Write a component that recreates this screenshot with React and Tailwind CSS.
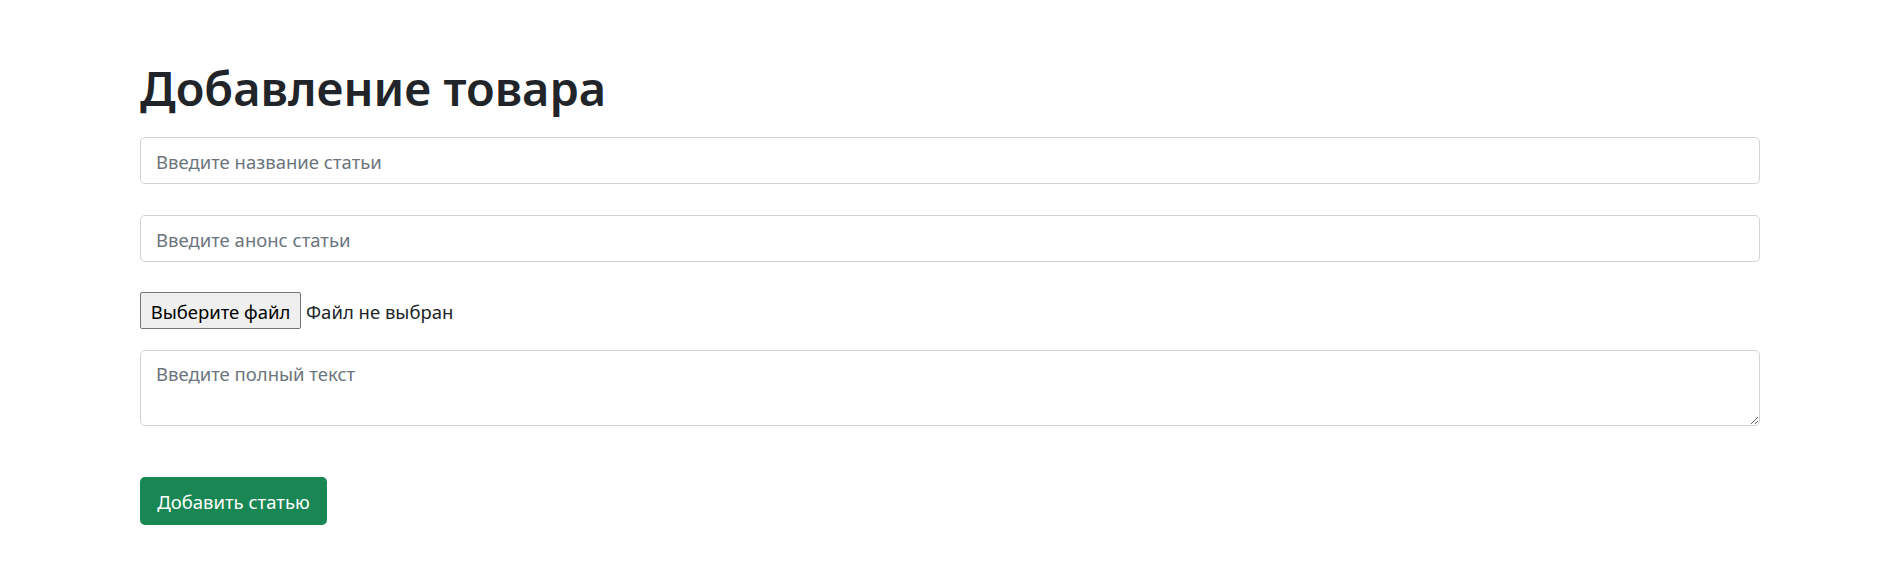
import React from "react";

const font = { fontFamily: '"Noto Sans", "Open Sans", sans-serif' };

const App = () => {
  return (
    <div className="min-h-[569px] w-full bg-white" style={font}>
      <div className="ml-[140px] w-[1620px] pt-[58px] flex flex-col">
        {/* Title */}
        <h1 className="h-[60px] leading-[60px] text-[47px] font-semibold text-[#212529] mb-[19px]">
          Добавление товара
        </h1>

        {/* Title input */}
        <input
          type="text"
          placeholder="Введите название статьи"
          className="h-[47px] w-full rounded-[5px] border border-[#ced4da] px-[15px] pt-[2px] text-[18.5px] text-[#212529] placeholder:text-[#6c757d] outline-none mb-[31px]"
        />

        {/* Announcement input */}
        <input
          type="text"
          placeholder="Введите анонс статьи"
          className="h-[47px] w-full rounded-[5px] border border-[#ced4da] px-[15px] pt-[2px] text-[18.5px] text-[#212529] placeholder:text-[#6c757d] outline-none mb-[30px]"
        />

        {/* File picker */}
        <div className="flex items-center h-[37px] mb-[21px]">
          <span className="h-[37px] w-[161px] flex items-center justify-center pt-[2px] rounded-[2px] border border-[#767676] bg-[#efefef] text-[18.5px] text-black">
            Выберите файл
          </span>
          <span className="ml-[5px] pt-[2px] text-[18.5px] text-[#212529]">Файл не выбран</span>
        </div>

        {/* Full text */}
        <textarea
          placeholder="Введите полный текст"
          className="h-[76px] w-full rounded-[5px] border border-[#ced4da] px-[15px] pt-[9px] text-[18.5px] text-[#212529] placeholder:text-[#6c757d] outline-none mb-[51px]"
        />

        {/* Submit */}
        <div>
          <button className="h-[48px] w-[187px] pt-[2px] rounded-[5px] bg-[#198754] text-white text-[18.5px]">
            Добавить статью
          </button>
        </div>
      </div>
    </div>
  );
};

export default App;
